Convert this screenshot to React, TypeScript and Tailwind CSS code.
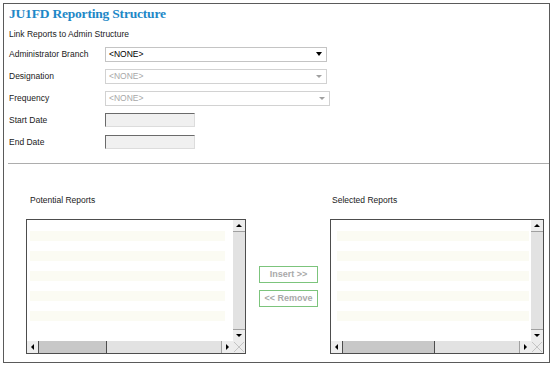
import React from "react"

const rows = ["a", "b", "c", "d", "e", "f", "g", "h", "i", "j"]

function Tri({ dir }: { dir: "up" | "down" | "left" | "right" }) {
  if (dir === "up")
    return <div className="w-0 h-0 border-x-[3px] border-b-[3px] border-x-transparent border-b-black" />
  if (dir === "down")
    return <div className="w-0 h-0 border-x-[3px] border-t-[3px] border-x-transparent border-t-black" />
  if (dir === "left")
    return <div className="w-0 h-0 border-y-[3px] border-r-[3px] border-y-transparent border-r-black" />
  return <div className="w-0 h-0 border-y-[3px] border-l-[3px] border-y-transparent border-l-black" />
}

function Select({ width, disabled }: { width: string; disabled?: boolean }) {
  return (
    <div
      className={`${width} h-[15px] flex items-center justify-between pl-[3px] pr-[4px] bg-white border ${
        disabled ? "border-[#d2d2d2] text-[#a8a8a8]" : "border-[#c4c4c4] text-black"
      }`}
    >
      <span className="text-[8.5px] leading-none">&lt;NONE&gt;</span>
      {disabled ? (
        <div className="w-0 h-0 border-x-[3px] border-t-[3px] border-x-transparent border-t-[#a0a0a0]" />
      ) : (
        <div className="w-0 h-0 border-x-[3px] border-t-[4px] border-x-transparent border-t-black" />
      )}
    </div>
  )
}

function DateBox() {
  return (
    <div className="w-[90px] h-[14px] bg-[#f0f0f0] border border-t-[#6a6a6a] border-l-[#6a6a6a] border-r-[#dcdcdc] border-b-[#dcdcdc]" />
  )
}

function ListBox({ width, thumb, stripes }: { width: string; thumb: string; stripes: string }) {
  return (
    <div className={`${width} h-[135px] border border-[#4d4d4d] flex flex-col bg-white`}>
      <div className="flex flex-1 min-h-0">
        <div className={`flex-1 pt-[1px] ${stripes}`}>
          {rows.map((r, i) => (
            <div key={r} className={`h-[10px] ${i % 2 === 1 ? "bg-[#fbfbf3]" : "bg-white"}`} />
          ))}
        </div>
        <div className="w-[12px] flex flex-col bg-[#e2e2e2]">
          <div className="h-[12px] bg-[#ededed] border-b border-[#a0a0a0] flex items-center justify-center">
            <Tri dir="up" />
          </div>
          <div className="flex-1" />
          <div className="h-[12px] bg-[#ededed] border-t border-[#a0a0a0] flex items-center justify-center">
            <Tri dir="down" />
          </div>
        </div>
      </div>
      <div className="h-[12px] flex bg-[#e2e2e2]">
        <div className="w-[12px] bg-[#ededed] border-r border-[#4d4d4d] flex items-center justify-center">
          <Tri dir="left" />
        </div>
        <div className={`${thumb} bg-[#c8c8c8] border-r border-[#4d4d4d]`} />
        <div className="flex-1" />
        <div className="w-[12px] bg-[#ededed] border-l border-[#a0a0a0] flex items-center justify-center">
          <Tri dir="right" />
        </div>
        <div className="w-[12px] bg-[#ececec]">
          <svg width="12" height="12" viewBox="0 0 12 12">
            <path d="M1 1 L11 11 M11 1 L1 11" stroke="#c4c4c4" strokeWidth="1" />
          </svg>
        </div>
      </div>
    </div>
  )
}

const fields = [
  { label: "Administrator Branch", control: <Select width="w-[222px]" /> },
  { label: "Designation", control: <Select width="w-[222px]" disabled /> },
  { label: "Frequency", control: <Select width="w-[225px]" disabled /> },
  { label: "Start Date", control: <DateBox /> },
  { label: "End Date", control: <DateBox /> },
]

export default function App() {
  return (
    <div className="w-[554px] h-[366px] bg-white pt-[3px] pl-[3px] font-['Liberation_Sans',Arial,sans-serif] text-[#1a1a1a]">
      <div className="w-[547px] h-[360px] border border-[#5a5a5a] flex flex-col">
        <div className="h-[22px] pl-[5px] text-[13.5px] leading-[20px] font-bold tracking-[-0.2px] text-[#1e88c7] font-['Liberation_Serif',serif]">
          JU1FD Reporting Structure
        </div>
        <div className="h-[17px] pl-[5px] text-[8.5px] leading-[17px]">Link Reports to Admin Structure</div>

        {fields.map((f) => (
          <div key={f.label} className="h-[22px] flex items-center pl-[5px]">
            <div className="w-[96px] text-[8.5px]">{f.label}</div>
            {f.control}
          </div>
        ))}

        <div className="mt-[10px] ml-[4px] h-px bg-[#adadad]" />

        <div className="flex pt-[30px] pl-[22px]">
          <div className="flex flex-col">
            <div className="h-[12px] leading-[12px] pl-[4px] mb-[13px] text-[8.5px]">Potential Reports</div>
            <ListBox width="w-[220px]" thumb="w-[68px]" stripes="pl-[3px] pr-[8px]" />
          </div>

          <div className="ml-[13px] mt-[25px] h-[135px] w-[59px] flex flex-col justify-center gap-[7px]">
            <div className="h-[17px] border border-[#7cc47c] bg-white flex items-center justify-center text-[9px] font-bold text-[#a9a9a9]">
              Insert &gt;&gt;
            </div>
            <div className="h-[17px] border border-[#7cc47c] bg-white flex items-center justify-center text-[9px] font-bold text-[#a9a9a9]">
              &lt;&lt; Remove
            </div>
          </div>

          <div className="ml-[12px] flex flex-col">
            <div className="h-[12px] leading-[12px] pl-[2px] mb-[13px] text-[8.5px]">Selected Reports</div>
            <ListBox width="w-[214px]" thumb="w-[92px]" stripes="pl-[6px] pr-[2px]" />
          </div>
        </div>
      </div>
    </div>
  )
}
